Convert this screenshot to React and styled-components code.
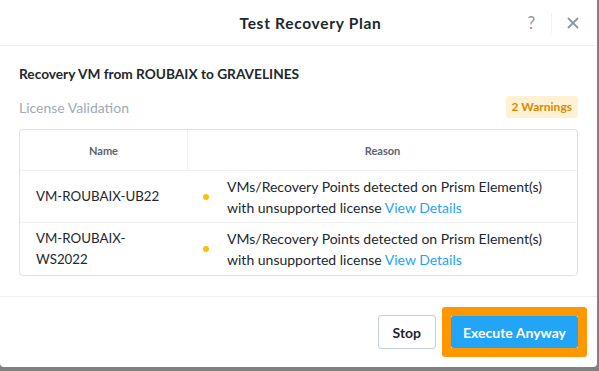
import React from "react";
import styled, { createGlobalStyle } from "styled-components";

const Global = createGlobalStyle`
  html, body { margin: 0; padding: 0; background: #808080; }
  body { font-family: "Lato", "Noto Sans", sans-serif; -webkit-font-smoothing: antialiased; }
  * { box-sizing: border-box; }
`;

const Dialog = styled.div`
  width: 597px;
  height: 367px;
  background: #ffffff;
  border-radius: 0 0 4px 4px;
  display: flex;
  flex-direction: column;
  color: #22272e;
`;

const Header = styled.div`
  height: 46px;
  border-bottom: 1px solid #eef0f2;
  display: grid;
  grid-template-columns: 1fr auto 1fr;
  align-items: center;
  padding: 0 18px 0 24px;
`;

const Title = styled.div`
  grid-column: 2;
  font-size: 15.5px;
  font-weight: 700;
  letter-spacing: 0.7px;
  color: #22272e;
  padding-left: 18px;
`;

const HeaderActions = styled.div`
  grid-column: 3;
  justify-self: end;
  display: flex;
  align-items: center;
  height: 22px;
`;

const HelpIcon = styled.span`
  font-size: 17px;
  color: #8a96a3;
  padding: 0 16px 0 0;
  line-height: 22px;
`;

const Sep = styled.span`
  width: 1px;
  height: 20px;
  background: #eef0f2;
`;

const CloseBtn = styled.span`
  padding: 0 0 0 15px;
  display: flex;
  align-items: center;
`;

const Body = styled.div`
  flex: 1;
  padding: 20px 19px 0 19px;
  display: flex;
  flex-direction: column;
  border-bottom: 1px solid #eef0f2;
`;

const Heading = styled.div`
  font-size: 13.7px;
  font-weight: 700;
  color: #22272e;
  line-height: 16px;
`;

const SectionRow = styled.div`
  display: flex;
  justify-content: space-between;
  align-items: center;
  margin-top: 14px;
  margin-bottom: 11px;
  height: 22px;
`;

const SectionLabel = styled.div`
  font-size: 14px;
  color: #a1aab3;
`;

const Badge = styled.div`
  background: #fff2d4;
  color: #d98a00;
  font-size: 12px;
  font-weight: 700;
  border-radius: 3px;
  padding: 0 6px;
  line-height: 22px;
`;

const Table = styled.div`
  border: 1px solid #dde1e6;
  border-radius: 4px;
  display: grid;
  grid-template-columns: 168px 1fr;
`;

const HeadCell = styled.div`
  height: 41px;
  display: flex;
  align-items: center;
  justify-content: center;
  font-size: 11px;
  font-weight: 700;
  color: #59636e;
  border-bottom: 1px solid #eef0f2;
  border-right: ${p => (p.$divider ? "1px solid #eef0f2" : "none")};
`;

const NameCell = styled.div`
  height: 52px;
  padding: 0 16px;
  display: flex;
  align-items: center;
  font-size: 13.3px;
  line-height: 21px;
  color: #22272e;
  white-space: pre-line;
  border-bottom: ${p => (p.$last ? "none" : "1px solid #eef0f2")};
`;

const ReasonCell = styled.div`
  height: 52px;
  display: flex;
  align-items: center;
  font-size: 14px;
  line-height: 21px;
  color: #22272e;
  border-bottom: ${p => (p.$last ? "none" : "1px solid #eef0f2")};
`;

const Dot = styled.span`
  width: 6px;
  height: 6px;
  border-radius: 50%;
  background: #ffbc0b;
  margin: 0 18px 0 15px;
  flex: none;
`;

const Link = styled.a`
  color: #22a5f7;
  text-decoration: none;
`;

const Footer = styled.div`
  height: 70px;
  display: flex;
  justify-content: flex-end;
  align-items: center;
  padding-right: 10px;
  gap: 6px;
`;

const StopButton = styled.button`
  height: 34px;
  padding: 0 14px;
  background: #fff;
  border: 1px solid #c8ced5;
  border-radius: 3px;
  font-family: inherit;
  font-size: 14px;
  font-weight: 700;
  color: #22272e;
`;

const Highlight = styled.div`
  border: 9px solid #ff9800;
  border-radius: 3px;
  display: flex;
`;

const PrimaryButton = styled.button`
  height: 32px;
  padding: 0 12px;
  background: #22a5f7;
  border: none;
  border-radius: 2px;
  font-family: inherit;
  font-size: 14px;
  font-weight: 700;
  color: #ffffff;
`;

const rows = [
  { name: "VM-ROUBAIX-UB22" },
  { name: "VM-ROUBAIX-\nWS2022" },
];

export default function App() {
  return (
    <>
      <Global />
      <Dialog>
        <Header>
          <Title>Test Recovery Plan</Title>
          <HeaderActions>
            <HelpIcon>?</HelpIcon>
            <Sep />
            <CloseBtn>
              <svg width="12" height="12" viewBox="0 0 12 12">
                <path d="M1.5 1.5 L10.5 10.5 M10.5 1.5 L1.5 10.5" stroke="#8a96a3" strokeWidth="1.8" strokeLinecap="round" />
              </svg>
            </CloseBtn>
          </HeaderActions>
        </Header>
        <Body>
          <Heading>Recovery VM from ROUBAIX to GRAVELINES</Heading>
          <SectionRow>
            <SectionLabel>License Validation</SectionLabel>
            <Badge>2 Warnings</Badge>
          </SectionRow>
          <Table>
            <HeadCell $divider>Name</HeadCell>
            <HeadCell>Reason</HeadCell>
            {rows.map((r, i) => {
              const last = i === rows.length - 1;
              return (
                <React.Fragment key={i}>
                  <NameCell $last={last}>{r.name}</NameCell>
                  <ReasonCell $last={last}>
                    <Dot />
                    <span>
                      VMs/Recovery Points detected on Prism Element(s)
                      <br />
                      with unsupported license <Link href="#">View Details</Link>
                    </span>
                  </ReasonCell>
                </React.Fragment>
              );
            })}
          </Table>
        </Body>
        <Footer>
          <StopButton>Stop</StopButton>
          <Highlight>
            <PrimaryButton>Execute Anyway</PrimaryButton>
          </Highlight>
        </Footer>
      </Dialog>
    </>
  );
}
